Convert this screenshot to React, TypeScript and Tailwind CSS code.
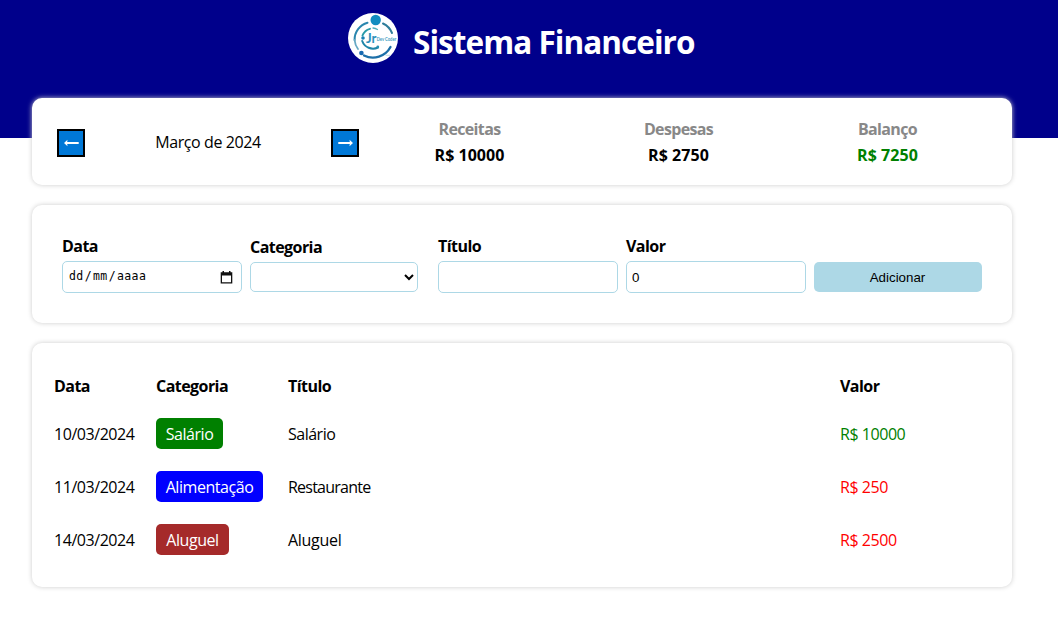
import type { ReactNode } from 'react';

const Logo = () => (
  <svg width="50" height="50" viewBox="0 0 50 50" className="shrink-0 overflow-visible">
    <circle cx="25" cy="25" r="25" fill="#fff" />
    <g fill="none" strokeLinecap="round">
      <path d="M19.500 9.800A17.500 17.500 0 0 0 6.600 27" stroke="#2a86ae" strokeWidth="2" />
      <path d="M6.600 27A17.500 17.500 0 0 0 10 36" stroke="#67a9c4" strokeWidth="1.8" />
      <path d="M35 10.500A18 18 0 0 1 44 20" stroke="#2f7d9a" strokeWidth="2" />
      <path d="M16 42.500A20 20 0 0 0 42.500 34" stroke="#1c6fa8" strokeWidth="2.300" />
      <path d="M22 15.800A11 11 0 0 0 14.500 22.500" stroke="#2a9aa8" strokeWidth="1.9" />
      <path d="M14.200 28A11.500 11.500 0 0 0 30 34.500" stroke="#1f86a8" strokeWidth="2" />
      <path d="M25 15A11.500 11.500 0 0 1 29.500 16.500" stroke="#4fb0bb" strokeWidth="1.3" />
      <path d="M38 42.300H42" stroke="#a9cfe0" strokeWidth="0.8" />
    </g>
    <circle cx="27.700" cy="7" r="5.200" fill="#118dc0" />
    <circle cx="13.400" cy="40" r="2.300" fill="#1769b0" />
    <circle cx="15" cy="25" r="1.800" fill="#1a80b4" />
    <circle cx="29.800" cy="34" r="1.400" fill="#2490b4" />
    <text x="18" y="29.500" fontSize="13.500" fontWeight="700" textLength="10.500" lengthAdjust="spacingAndGlyphs" fontFamily="Lato, sans-serif" fill="#2b90bb">Jr</text>
    <text x="28.700" y="28.300" fontSize="5" fontWeight="700" textLength="19.500" lengthAdjust="spacingAndGlyphs" fontFamily="Lato, sans-serif" fill="#3c9cc0">Dev Coder</text>
  </svg>
);

const Card = ({ className, children }: { className: string; children: ReactNode }) => (
  <section className={`w-[980px] rounded-[10px] bg-white shadow-[0_0_5px_#cccccc] ${className}`}>{children}</section>
);

const ArrowButton = ({ flip = false, label }: { flip?: boolean; label: string }) => (
  <button aria-label={label} className="flex size-[28px] items-center justify-center border-2 border-black bg-[#0078d7]">
    <svg width="15" height="8" viewBox="0 0 15 8" className={flip ? 'rotate-180' : ''}>
      <path d="M0 4L3.500 .8L3.200 3.100H14.700V4.900H3.200L3.500 7.200Z" fill="#fff" />
    </svg>
  </button>
);

const Total = ({ title, value, valueClass }: { title: string; value: string; valueClass: string }) => (
  <div className="flex flex-1 flex-col items-center gap-[5px] font-bold leading-[21px]">
    <div className="tracking-[-0.65px] text-[#888888]">{title}</div>
    <div className={valueClass}>{value}</div>
  </div>
);

const Field = ({ label, className, children }: { label: string; className: string; children: ReactNode }) => (
  <label className={`flex w-[168px] flex-col ${className}`}>
    <span className="mb-[4px] pt-px font-bold leading-[21px] tracking-[-0.55px]">{label}</span>
    {children}
  </label>
);

const rows = [
  { date: '10/03/2024', category: 'Salário', badge: 'w-[67px] bg-[#008000]', title: 'Salário', titleClass: 'tracking-[-0.5px]', value: 'R$ 10000', color: 'text-[#008000]' },
  { date: '11/03/2024', category: 'Alimentação', badge: 'w-[107px] bg-[#0000ff]', title: 'Restaurante', titleClass: 'tracking-[-0.77px]', value: 'R$ 250', color: 'text-[#ff0000]' },
  { date: '14/03/2024', category: 'Aluguel', badge: 'w-[73px] bg-[#a52a2a]', title: 'Aluguel', titleClass: 'tracking-[-0.3px]', value: 'R$ 2500', color: 'text-[#ff0000]' },
];

export default function App() {
  return (
    <div className="h-[620px] overflow-hidden bg-white font-['Open_Sans',sans-serif] text-[16px] text-black">
      <header className="flex h-[138px] items-start justify-center gap-[15px] bg-[#00008b] pr-[16px] pt-[13px]">
        <Logo />
        <h1 className="w-[281px] whitespace-nowrap pt-[7px] text-[31.5px] font-bold leading-[43px] tracking-[-0.95px] text-white">Sistema Financeiro</h1>
      </header>
      <main className="relative -mt-[40px] ml-[32px] flex w-[980px] flex-col gap-[20px]">
        <Card className="flex h-[87px] items-center p-[20px]">
          <div className="flex w-[313px] items-center justify-between pl-[5px] pr-[6px] pt-[3px]">
            <ArrowButton label="Mês anterior" />
            <div className="pb-[2px] tracking-[-0.4px]">Março de 2024</div>
            <ArrowButton flip label="Próximo mês" />
          </div>
          <div className="flex flex-1 pt-[2px]">
            <Total title="Receitas" value="R$ 10000" valueClass="tracking-[0.02px]" />
            <Total title="Despesas" value="R$ 2750" valueClass="tracking-[0.05px]" />
            <Total title="Balanço" value="R$ 7250" valueClass="tracking-[0.05px] text-[#008000]" />
          </div>
        </Card>

        <Card className="flex h-[118px] items-start gap-[20px] px-[30px] pt-[30px]">
          <Field label="Data" className="">
            <div className="flex h-[32px] w-[180px] items-center justify-between rounded-[5px] border border-[#add8e6] pl-[5px] pr-[8px]">
              <div className="flex font-['DejaVu_Sans_Mono',monospace] text-[11.5px] tracking-[0.4px]">
                <span className="px-px">dd</span>/<span className="px-px">mm</span>/<span className="px-px">aaaa</span>
              </div>
              <svg width="13" height="13" viewBox="0 0 13 13">
                <path d="M2.500 0H4V1.200H9V0H10.500V1.200H12.300V12.500H.7V1.200H2.500ZM2 4.400V11.300H11V4.400Z" fill="#111" fillRule="evenodd" />
              </svg>
            </div>
          </Field>
          <Field label="Categoria" className="pt-px">
            <select className="h-[30px] w-[168px] rounded-[5px] border border-[#add8e6] bg-white font-['Liberation_Sans',sans-serif] text-[13.333px]">
              <option></option>
            </select>
          </Field>
          <Field label="Título" className="">
            <input className="h-[32px] w-[180px] rounded-[5px] border border-[#add8e6] px-[5px] font-['Liberation_Sans',sans-serif] text-[13.333px]" />
          </Field>
          <Field label="Valor" className="">
            <input defaultValue="0" className="h-[32px] w-[180px] rounded-[5px] border border-[#add8e6] px-[5px] font-['Liberation_Sans',sans-serif] text-[13.333px]" />
          </Field>
          <button className="mt-[27px] h-[30px] w-[168px] rounded-[5px] bg-[#add8e6] pr-px pt-px font-['Liberation_Sans',sans-serif] text-[13.333px]">Adicionar</button>
        </Card>

        <Card className="h-[244px] pl-[22px] pt-[20px]">
          <div className="grid h-[44px] grid-cols-[102px_132px_552px_1fr] items-center pt-px font-bold tracking-[-0.55px]">
            <div>Data</div>
            <div>Categoria</div>
            <div>Título</div>
            <div>Valor</div>
          </div>
          {rows.map((row) => (
            <div key={row.date} className="grid h-[53px] grid-cols-[102px_132px_552px_1fr] items-center tracking-[-0.45px]">
              <div>{row.date}</div>
              <div className={`flex h-[31px] items-center justify-center whitespace-nowrap rounded-[5px] text-white ${row.badge}`}>{row.category}</div>
              <div className={row.titleClass}>{row.title}</div>
              <div className={row.color}>{row.value}</div>
            </div>
          ))}
        </Card>
      </main>
    </div>
  );
}
